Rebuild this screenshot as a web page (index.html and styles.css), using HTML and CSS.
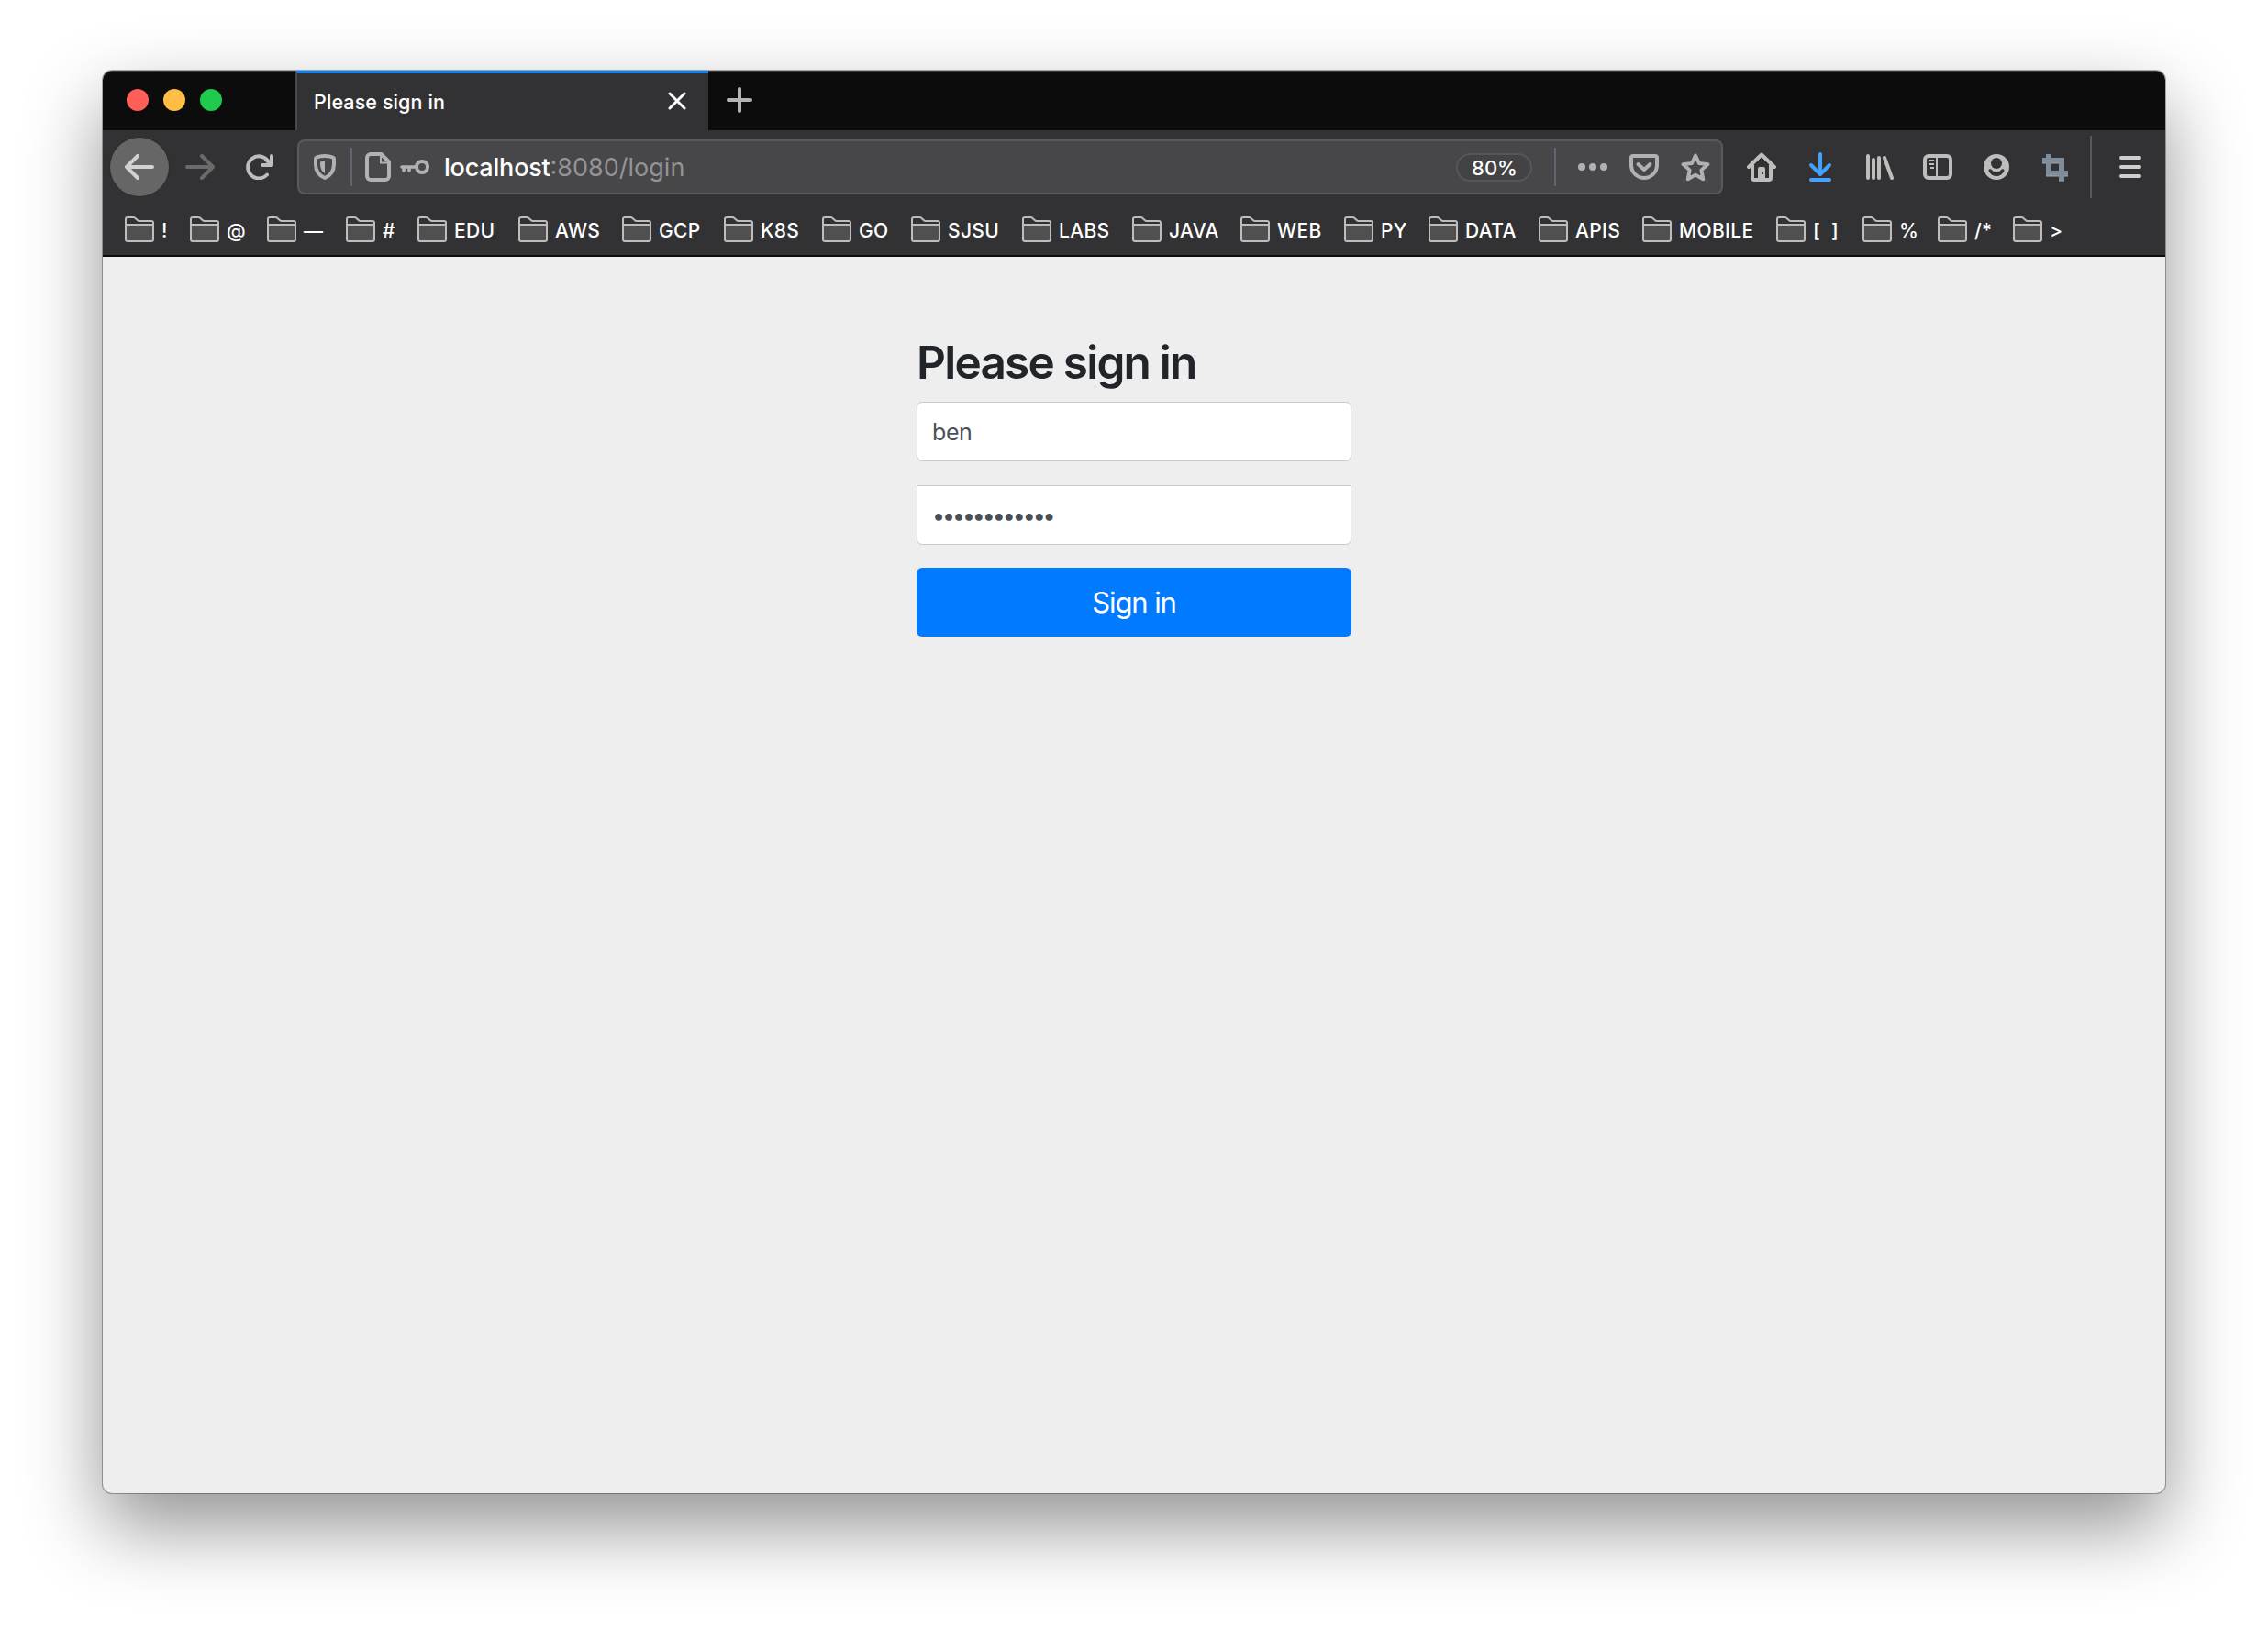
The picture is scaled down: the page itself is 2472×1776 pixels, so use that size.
FILE: index.html
```html
<!DOCTYPE html>
<html lang="en">
<head>
<meta charset="utf-8">
<title>Please sign in</title>
<link rel="stylesheet" href="styles.css">
</head>
<body>
<svg class="defs" width="0" height="0">
  <symbol id="folder" viewBox="0 0 32 28">
    <path d="M1 9h30v16a2 2 0 0 1-2 2H3a2 2 0 0 1-2-2z" fill="#505051"/>
    <path d="M1 9h30M1 3a2 2 0 0 1 2-2h6.500q1 0 1.700.7L14 4.300q.7.7 1.700.7H29a2 2 0 0 1 2 2v18a2 2 0 0 1-2 2H3a2 2 0 0 1-2-2z" fill="none" stroke="#bdbdbe" stroke-width="2"/>
  </symbol>
</svg>
<div class="window">
  <header class="tabbar">
    <div class="lights"><i class="light red"></i><i class="light yellow"></i><i class="light green"></i></div>
    <div class="tab">
      <span class="tab-title">Please sign in</span>
      <svg class="close" width="20" height="20" viewBox="0 0 20 20"><path d="M2 2l16 16M18 2L2 18" stroke="#fff" stroke-width="3" stroke-linecap="round"/></svg>
    </div>
    <svg class="plus" width="28" height="28" viewBox="0 0 28 28"><path d="M14 2v24M2 14h24" stroke="#b4b4b5" stroke-width="4" stroke-linecap="round"/></svg>
  </header>

  <nav class="toolbar">
    <div class="back"><svg width="32" height="28" viewBox="0 0 32 28"><path d="M30 14H2M14 2L2 14l12 12" fill="none" stroke="#d2d2d2" stroke-width="4" stroke-linecap="round" stroke-linejoin="round"/></svg></div>
    <svg class="forward" width="32" height="28" viewBox="0 0 32 28"><path d="M2 14h28M18 2l12 12-12 12" fill="none" stroke="#6b6b6c" stroke-width="4" stroke-linecap="round" stroke-linejoin="round"/></svg>
    <svg class="reload" width="30" height="28" viewBox="0 0 30 28"><path d="M23 22.500A12 12 0 1 1 24 7.500" fill="none" stroke="#bdbdbe" stroke-width="4" stroke-linecap="round"/><path d="M28 2v10H18M28 12l-6-6" fill="none" stroke="#bdbdbe" stroke-width="4" stroke-linecap="round" stroke-linejoin="round"/></svg>

    <div class="urlbar">
      <svg class="shield" width="24" height="28" viewBox="0 0 24 28"><path d="M2 5Q2 3.900 3 3.600Q12 .4 21 3.600Q22 3.900 22 5V11Q22 22 12 26Q2 22 2 11Z" fill="none" stroke="#b1b1b3" stroke-width="4" stroke-linejoin="round"/><path d="M12 7.500V21Q7 18 7 11V8.500Z" fill="#b1b1b3"/></svg>
      <i class="divider"></i>
      <svg class="page" width="28" height="32" viewBox="0 0 28 32"><path d="M6 2h11.500L26 10.500V26a4 4 0 0 1-4 4H6a4 4 0 0 1-4-4V6a4 4 0 0 1 4-4z" fill="none" stroke="#b1b1b3" stroke-width="4" stroke-linejoin="round"/><path d="M17 3v8.500h8.500" fill="none" stroke="#b1b1b3" stroke-width="2"/></svg>
      <svg class="key" width="32" height="18" viewBox="0 0 32 18"><circle cx="24" cy="9" r="6" fill="none" stroke="#b1b1b3" stroke-width="4"/><path d="M18 9H2M4 9v4M10 9v4" fill="none" stroke="#b1b1b3" stroke-width="3.600" stroke-linecap="round"/></svg>
      <span class="url"><b>localhost</b>:8080/login</span>
      <span class="zoom">80%</span>
      <i class="divider"></i>
      <svg class="dots" width="32" height="8" viewBox="0 0 32 8" fill="#b1b1b3"><circle cx="4" cy="4" r="4"/><circle cx="16" cy="4" r="4"/><circle cx="28" cy="4" r="4"/></svg>
      <svg class="pocket" width="32" height="28" viewBox="0 0 32 28" fill="none" stroke="#b1b1b3" stroke-width="4" stroke-linejoin="round" stroke-linecap="round"><path d="M4 2h24q2 0 2 2v8a14 14 0 0 1-28 0V4q0-2 2-2z"/><path d="M9.500 11l6.500 6 6.500-6"/></svg>
      <svg class="star" width="32" height="32" viewBox="0 0 32 32"><path d="M16 3.500l3.900 8.500 9.600 1.100-7.100 6.300 1.900 9.900L16 24.600l-8.300 4.700 1.900-9.900-7.100-6.300L12.100 12z" fill="none" stroke="#b1b1b3" stroke-width="3.900" stroke-linejoin="round"/></svg>
    </div>

    <div class="actions">
      <svg width="32" height="32" viewBox="0 0 32 32"><path d="M2 16L16 2.500 30 16M6 14v14q0 2 2 2h16q2 0 2-2V14" fill="none" stroke="#bdbdbe" stroke-width="4" stroke-linecap="round" stroke-linejoin="round"/><path d="M12 30V18q0-2 2-2h4q2 0 2 2v12z" fill="#bdbdbe"/><path d="M16 22h2v2h-2z" fill="#323234"/></svg>
      <svg width="32" height="32" viewBox="0 0 32 32"><path d="M16 2v22M6 14l10 10 10-10M6 30h20" fill="none" stroke="#45a1ff" stroke-width="4" stroke-linecap="round" stroke-linejoin="round"/></svg>
      <svg width="32" height="32" viewBox="0 0 32 32"><path d="M4 4v24M10 8v20M16 6v22M22 6l8 22" fill="none" stroke="#bdbdbe" stroke-width="4" stroke-linecap="round"/></svg>
      <svg width="32" height="32" viewBox="0 0 32 32"><rect x="2" y="4" width="28" height="24" rx="4" fill="none" stroke="#bdbdbe" stroke-width="4"/><path d="M15 4v24M6 9h6M8 13h4M6 13h6M8 17h4" stroke="#bdbdbe" stroke-width="2"/></svg>
      <svg width="32" height="32" viewBox="0 0 32 32"><circle cx="16" cy="16" r="14" fill="#bdbdbe"/><circle cx="16" cy="12" r="6" fill="#323234"/><path d="M9 18.300c-1.500 0-1.800 1.200-1.200 2.400C9.500 24 12.500 26 16 26s6.500-2 8.200-5.300c.6-1.200.3-2.400-1.200-2.400-1 0-1.300.4-1.900 1C19.700 20.700 18 21.500 16 21.500s-3.700-.8-5.100-2.200c-.6-.6-.9-1-1.900-1z" fill="#323234"/></svg>
      <svg width="32" height="32" viewBox="0 0 32 32"><path d="M6 2h6v4h14v14h4v6h-4v5h-6v-5H6V12H2V6h4zM12 12v8h8v-8z" fill="#7f8c99" fill-rule="evenodd"/><path d="M2 12h4M6 26h14M20 31h6M26 26h4M12 12h8" stroke="#a3abb3" stroke-width="1"/></svg>
      <i class="rule"></i>
      <svg class="menu" width="24" height="24" viewBox="0 0 24 24"><path d="M2 2h20M2 12h20M2 22h20" stroke="#cfcfd0" stroke-width="4" stroke-linecap="round"/></svg>
    </div>
  </nav>

  <nav class="bookmarks">
    <a><svg><use href="#folder"/></svg>!</a>
    <a><svg><use href="#folder"/></svg>@</a>
    <a><svg><use href="#folder"/></svg>—</a>
    <a><svg><use href="#folder"/></svg>#</a>
    <a><svg><use href="#folder"/></svg>EDU</a>
    <a><svg><use href="#folder"/></svg>AWS</a>
    <a><svg><use href="#folder"/></svg>GCP</a>
    <a><svg><use href="#folder"/></svg>K8S</a>
    <a><svg><use href="#folder"/></svg>GO</a>
    <a><svg><use href="#folder"/></svg>SJSU</a>
    <a><svg><use href="#folder"/></svg>LABS</a>
    <a><svg><use href="#folder"/></svg>JAVA</a>
    <a><svg><use href="#folder"/></svg>WEB</a>
    <a><svg><use href="#folder"/></svg>PY</a>
    <a><svg><use href="#folder"/></svg>DATA</a>
    <a><svg><use href="#folder"/></svg>APIS</a>
    <a><svg><use href="#folder"/></svg>MOBILE</a>
    <a class="wide"><svg><use href="#folder"/></svg>[ ]</a>
    <a><svg><use href="#folder"/></svg>%</a>
    <a><svg><use href="#folder"/></svg>/*</a>
    <a><svg><use href="#folder"/></svg>&gt;</a>
  </nav>

  <main class="content">
    <form class="signin">
      <h2>Please sign in</h2>
      <div class="field user">ben</div>
      <div class="field pass">••••••••••••</div>
      <div class="button">Sign in</div>
    </form>
  </main>
</div>
</body>
</html>
```
FILE: styles.css
```css
* { box-sizing: border-box; }
body {
  margin: 0;
  width: 2472px;
  height: 1776px;
  padding: 77px 112px 0;
  background: #fff;
  overflow: hidden;
  font-family: Inter, "Liberation Sans", sans-serif;
}
svg { display: block; flex: none; }
.defs { position: absolute; }
.window {
  width: 2248px;
  height: 1551px;
  border-radius: 10px;
  background: #eee;
  box-shadow: 0 0 0 1px rgba(0, 0, 0, .3), 0 36px 84px rgba(0, 0, 0, .43);
  display: flex;
  flex-direction: column;
}

/* tab strip */
.tabbar {
  height: 65px;
  background: #0c0c0d;
  border-radius: 10px 10px 0 0;
  border-top: 1px solid #3a3a3b;
  display: flex;
  align-items: flex-start;
}
.lights { width: 210px; padding: 19px 0 0 26px; display: flex; gap: 16px; }
.light { width: 24px; height: 24px; border-radius: 50%; }
.red { background: #ff5f57; }
.yellow { background: #ffbd44; }
.green { background: #1fca4d; }
.tab {
  width: 450px;
  height: 65px;
  margin-top: -1px;
  border-left: 2px solid #4a4a4b;
  border-top: 3px solid #0a84ff;
  background: #323234;
  display: flex;
  justify-content: space-between;
  padding: 0 24px 0 18px;
}
.tab-title {
  color: #fff;
  font-size: 21.500px;
  line-height: 26px;
  margin-top: 18px;
  font-weight: 500;
  letter-spacing: .1px;
}
.close { margin-top: 20px; }
.plus { margin: 17px 0 0 20px; }

/* navigation */
.toolbar {
  height: 80px;
  background: #323234;
  display: flex;
  align-items: center;
}
.back {
  width: 66px;
  height: 66px;
  margin-left: 7px;
  border-radius: 50%;
  background: #666667;
  border: 1.500px solid #29292a;
  display: flex;
  align-items: center;
  justify-content: center;
}
.forward { margin-left: 17px; }
.reload { margin-left: 34px; }
.urlbar {
  width: 1554px;
  height: 60px;
  margin-left: 26px;
  background: #474749;
  border: 2px solid #59595b;
  border-radius: 8px;
  display: flex;
  align-items: center;
}
.shield { margin-left: 16px; }
.divider { width: 2px; height: 42px; background: #5f6670; margin-left: 16px; }
.page { margin-left: 14px; }
.key { margin-left: 10px; }
.url {
  flex: 1;
  margin-left: 16px;
  padding-top: 2px;
  font-size: 27px;
  line-height: 34px;
  color: #949495;
}
.url b { color: #fff; font-weight: 500; letter-spacing: -.2px; }
.zoom {
  width: 83px;
  height: 31px;
  border: 2px solid #565658;
  border-radius: 16px;
  background: #434345;
  color: #fff;
  font-size: 22px;
  line-height: 29px;
  text-align: center;
  text-indent: 1px;
  font-weight: 500;
}
.zoom + .divider { margin-left: 24px; }
.dots { margin-left: 24px; }
.pocket { margin-left: 24px; }
.star { margin: 0 12px 0 24px; }
.actions { display: flex; align-items: center; gap: 32px; margin-left: 26px; }
.rule { width: 2px; height: 68px; background: #59595a; margin-left: -10px; }
.menu { margin-left: -2px; }

/* bookmarks */
.bookmarks {
  height: 58px;
  background: #323234;
  border-bottom: 2px solid #0c0c0d;
  padding-left: 24px;
  display: grid;
  grid-template-columns: 71px 84px 86px 78px 110px 113px 111px 107px 97px 121px 120px 118px 113px 92px 120px 113px 146px 94px 82px 82px 100px;
  align-items: start;
}
.bookmarks a {
  display: flex;
  gap: 8px;
  height: 28px;
  margin-top: 14px;
  color: #fff;
  font-size: 21px;
  line-height: 32px;
  font-weight: 500;
  letter-spacing: .35px;
  white-space: nowrap;
}
.bookmarks svg { width: 32px; height: 28px; }
.bookmarks .wide { word-spacing: 6px; }

/* page */
.content { flex: 1; }
.signin { width: 474px; margin: 0 auto; padding-top: 84px; }
h2 {
  margin: 0;
  height: 74px;
  font-size: 49.500px;
  line-height: 63px;
  font-weight: 600;
  letter-spacing: -1.750px;
  color: #212529;
}
.field {
  height: 65px;
  border: 1px solid #c9c9cb;
  border-radius: 6px;
  background: #fff;
  color: #495057;
  font-size: 25px;
  line-height: 65px;
  padding-left: 16px;
  letter-spacing: -.4px;
}
.pass {
  margin-top: 26px;
  border-radius: 0 0 6px 6px;
  letter-spacing: -3.100px;
}
.button {
  margin-top: 25px;
  height: 75px;
  border-radius: 6px;
  background: #007bff;
  color: #fff;
  font-size: 31px;
  line-height: 75px;
  letter-spacing: -1.100px;
  text-align: center;
}
```
